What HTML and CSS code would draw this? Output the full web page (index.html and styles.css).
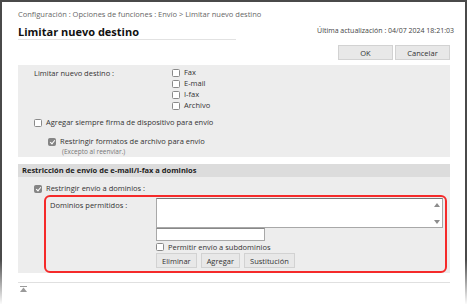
FILE: index.html
```html
<!DOCTYPE html>
<html lang="es">
<head>
    <meta charset="UTF-8">
    <meta name="viewport" content="width=device-width, initial-scale=1.0">
    <title>Limitar nuevo destino</title>
    <link rel="stylesheet" href="styles.css">
</head>
<body>
    <div class="window">
        <div class="breadcrumb">Configuración : Opciones de funciones : Envío &gt; Limitar nuevo destino</div>
        <div class="title-row">
            <h1>Limitar nuevo destino</h1>
            <span class="updated">Última actualización : 04/07 2024 18:21:03</span>
        </div>
        <div class="actions">
            <button class="btn btn-main">OK</button>
            <button class="btn btn-main">Cancelar</button>
        </div>

        <div class="panel">
            <div class="dest-row">
                <div class="dest-label">Limitar nuevo destino :</div>
                <div class="dest-list">
                    <div class="check"><span class="cb"></span>Fax</div>
                    <div class="check"><span class="cb"></span>E-mail</div>
                    <div class="check"><span class="cb"></span>I-fax</div>
                    <div class="check"><span class="cb"></span>Archivo</div>
                </div>
            </div>
            <div class="check sign-row"><span class="cb"></span>Agregar siempre firma de dispositivo para envío</div>
            <div class="check format-row"><span class="cb checked"></span>Restringir formatos de archivo para envío</div>
            <div class="note">(Excepto al reenviar.)</div>
        </div>

        <div class="section">
            <div class="section-head">Restricción de envío de e-mail/I-fax a dominios</div>
            <div class="section-body">
                <div class="check domain-check"><span class="cb checked"></span>Restringir envío a dominios :</div>
                <div class="domains">
                    <div class="domains-label">Dominios permitidos :</div>
                    <div class="domains-field">
                        <div class="textarea">
                            <div class="scroll">
                                <svg width="6" height="4" viewBox="0 0 6 4"><path d="M3 0 L6 4 L0 4 Z" fill="#8c8c8c"/></svg>
                                <svg width="6" height="4" viewBox="0 0 6 4"><path d="M0 0 L6 0 L3 4 Z" fill="#8c8c8c"/></svg>
                            </div>
                        </div>
                        <div class="input"></div>
                        <div class="check sub-check"><span class="cb"></span>Permitir envío a subdominios</div>
                        <div class="domain-actions">
                            <button class="btn btn-small">Eliminar</button>
                            <button class="btn btn-small">Agregar</button>
                            <button class="btn btn-small">Sustitución</button>
                        </div>
                    </div>
                </div>
            </div>
        </div>

        <div class="footer">
            <svg width="7" height="6" viewBox="0 0 7 6"><rect x="0" y="0" width="7" height="1" fill="#9a9a9a"/><path d="M3.5 1.5 L7 6 L0 6 Z" fill="#9a9a9a"/></svg>
        </div>
    </div>
</body>
</html>
```

FILE: styles.css
```css
body {
    margin: 0;
    font-family: "Open Sans", "Noto Sans", sans-serif;
    font-size: 7.5px;
    color: #333;
    background: #fff;
}
.window {
    width: 467px;
    height: 304px;
    box-sizing: border-box;
    border: 2px solid #4a4a4a;
    border-bottom: 0;
    border-image: linear-gradient(to bottom, #4a4a4a 85%, rgba(74, 74, 74, 0)) 1;
    padding: 6px 15px 0 16px;
    overflow: hidden;
}
.breadcrumb {
    font-size: 7.5px;
    line-height: 12px;
    color: #666;
}
.title-row {
    display: flex;
    justify-content: space-between;
    align-items: flex-end;
    margin-top: 5px;
}
h1 {
    margin: 0;
    width: 218px;
    font-size: 11px;
    line-height: 14px;
    font-weight: bold;
    color: #111;
    border-bottom: 1px solid #e2e2e2;
}
.updated {
    font-size: 7px;
    line-height: 12px;
    margin: 0 -4px 3px 0;
    color: #444;
}
.actions {
    display: flex;
    justify-content: flex-end;
    gap: 2px;
    margin-top: 5px;
}
.btn {
    font-family: inherit;
    font-size: 7.5px;
    color: #333;
    background: #e8e8e8;
    border: 1px solid #d2d2d2;
    padding: 0;
    margin: 0;
}
.btn-main {
    width: 55px;
    height: 15px;
}
.panel {
    margin-top: 5px;
    background: #ededed;
    padding: 2px 16px 1px;
}
.check {
    display: flex;
    align-items: center;
    height: 11px;
    line-height: 11px;
    white-space: nowrap;
}
.cb {
    width: 8px;
    height: 8px;
    box-sizing: border-box;
    border: 1px solid #8a8a8a;
    border-radius: 1.5px;
    background: #fff;
    margin-right: 4px;
    flex: none;
    position: relative;
}
.cb.checked {
    background: #858585;
    border-color: #858585;
}
.cb.checked::after {
    content: "";
    position: absolute;
    left: 2px;
    top: 0;
    width: 2px;
    height: 4px;
    border: solid #fff;
    border-width: 0 1px 1px 0;
    transform: rotate(40deg);
}
.dest-row {
    display: grid;
    grid-template-columns: 138px 1fr;
}
.dest-label {
    line-height: 11px;
    padding-top: 1px;
}
.sign-row {
    margin-top: 6px;
}
.format-row {
    margin-top: 8px;
    margin-left: 14px;
}
.note {
    margin-left: 28px;
    font-size: 6.5px;
    line-height: 9px;
    color: #777;
}
.section {
    margin-top: 7px;
}
.section-head {
    background: #dcdcdc;
    height: 13px;
    line-height: 13px;
    padding-left: 4px;
    font-weight: bold;
    font-size: 7.5px;
    color: #222;
}
.section-body {
    background: #ededed;
    padding: 6px 0 0 16px;
}
.domains {
    display: grid;
    grid-template-columns: 106px 1fr;
    margin: 1px 3px 0 10px;
    padding: 1px 2px 3px 4px;
    border: 2px solid #f52a2a;
    border-radius: 6px;
}
.domains-label {
    padding-top: 2px;
    line-height: 11px;
}
.textarea {
    height: 30px;
    box-sizing: border-box;
    background: #fff;
    border: 1px solid #a8a8a8;
    border-top-color: #777;
    display: flex;
    justify-content: flex-end;
}
.scroll {
    display: flex;
    flex-direction: column;
    justify-content: space-between;
    padding: 4px 2px 3px 0;
}
.scroll svg {
    display: block;
}
.input {
    width: 109px;
    height: 13px;
    box-sizing: border-box;
    background: #fff;
    border: 1px solid #a8a8a8;
    border-top-color: #888;
}
.sub-check {
    height: 12px;
}
.domain-actions {
    display: flex;
    gap: 4px;
}
.btn-small {
    height: 15px;
    padding: 0 5px;
}
.footer {
    margin-top: 9px;
    border-top: 1px solid #e0e0e0;
    padding: 3px 0 0 2px;
}
.footer svg {
    display: block;
}
```
